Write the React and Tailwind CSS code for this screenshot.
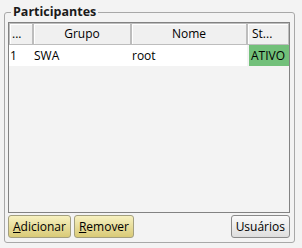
export default function App() {
  const font = { fontFamily: '"Open Sans", "Liberation Sans", sans-serif' };

  return (
    <div className="w-[302px] h-[248px] bg-[#f3f3f3] text-[12px] text-black pt-[4px]" style={font}>
      <fieldset className="ml-[4px] w-[291px] border border-[#a8a8a8] rounded-[3px] pl-[3px] pr-[4px] pb-[4px] pt-[2px]">
        <legend className="ml-[3px] px-[2px] font-bold text-[12.5px] leading-[16px] text-[#1a1a1a]">
          Participantes
        </legend>

        {/* Lista */}
        <div className="h-[191px] border border-[#828282] bg-[#f3f3f3]">
          <div className="flex h-[22px] bg-[#f0f0f0]">
            <div className="w-[24px] border border-[#bdbdbd] shadow-[inset_1px_1px_0_#ffffff] pl-[2px] leading-[19px]">...</div>
            <div className="w-[98px] border border-[#bdbdbd] shadow-[inset_1px_1px_0_#ffffff] text-center leading-[19px]">Grupo</div>
            <div className="w-[116px] border border-[#bdbdbd] shadow-[inset_1px_1px_0_#ffffff] text-center leading-[19px]">Nome</div>
            <div className="flex-1 border border-[#bdbdbd] shadow-[inset_1px_1px_0_#ffffff] pl-[4px] leading-[19px]">St...</div>
          </div>
          <div className="flex h-[21px] leading-[21px]">
            <div className="w-[24px] bg-white pl-[1px]">1</div>
            <div className="w-[98px] bg-white pl-[1px]">SWA</div>
            <div className="w-[116px] bg-white pl-[1px]">root</div>
            <div className="flex-1 bg-[#72c07a] ml-[2px] pl-[2px]">ATIVO</div>
          </div>
        </div>

        {/* Botões */}
        <div className="flex mt-[2px] gap-[3px]">
          <button className="h-[23px] px-[4px] rounded-[3px] border border-[#a39f7f] bg-gradient-to-b from-[#f7f1c0] to-[#d9ca76] leading-[20px]">
            <span className="underline">A</span>dicionar
          </button>
          <button className="h-[23px] px-[4px] rounded-[3px] border border-[#a39f7f] bg-gradient-to-b from-[#f7f1c0] to-[#d9ca76] leading-[20px]">
            <span className="underline">R</span>emover
          </button>
          <button className="ml-auto h-[23px] px-[4px] rounded-[3px] border border-[#8a8a8a] bg-gradient-to-b from-[#fafafa] to-[#dedede] leading-[20px]">
            Usuários
          </button>
        </div>
      </fieldset>
    </div>
  );
}
